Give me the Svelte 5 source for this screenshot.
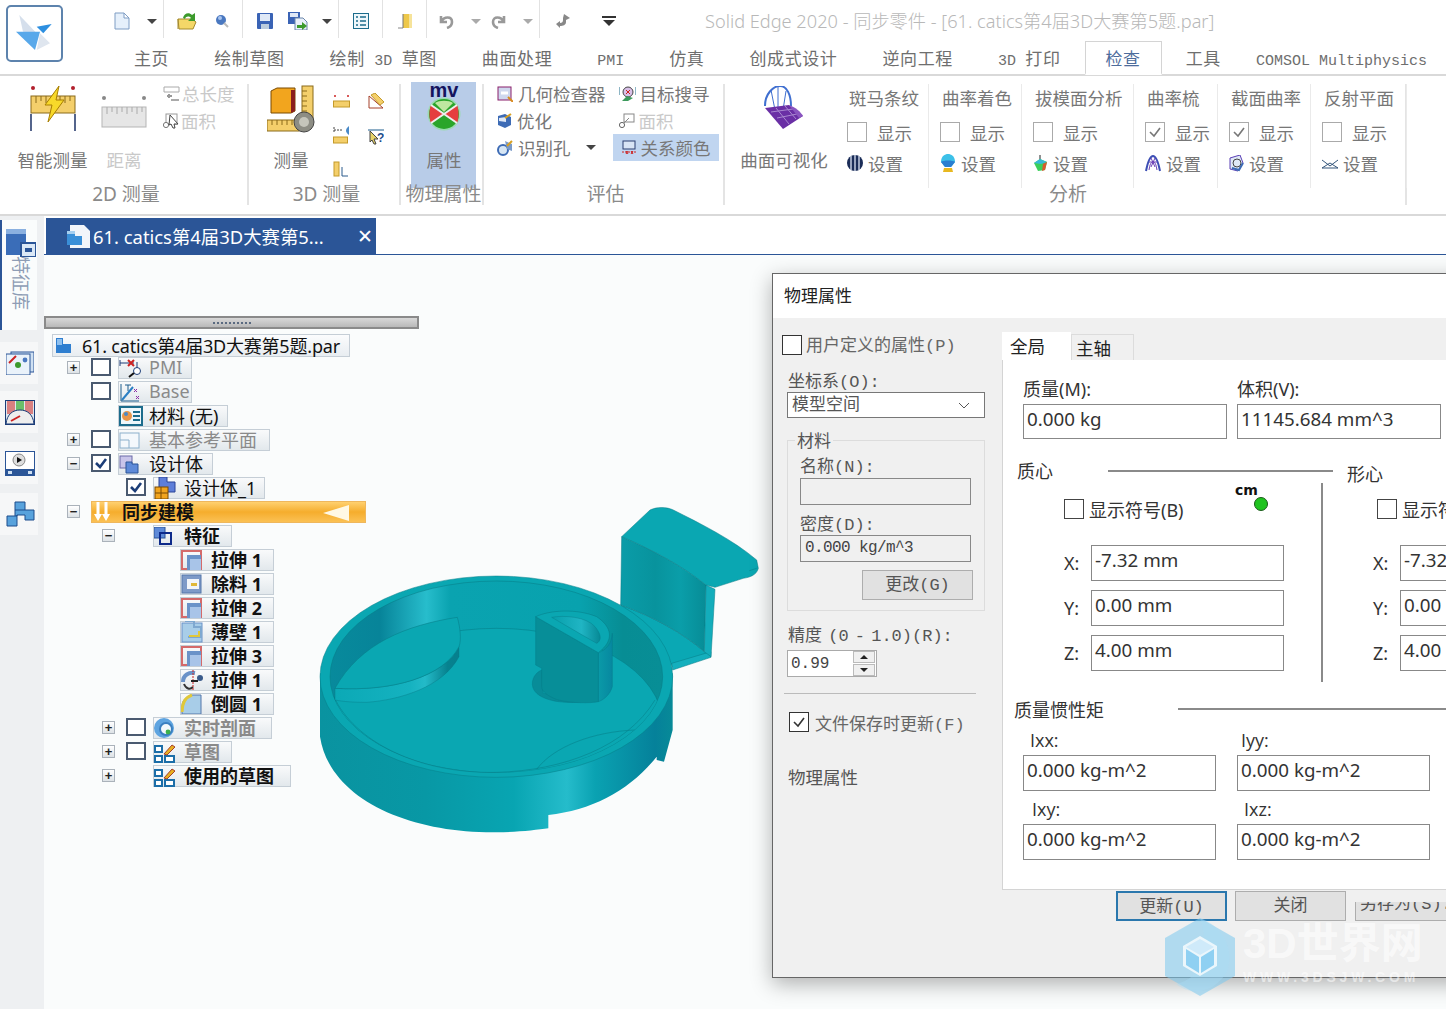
<script>
	// 图标都按原始像素尺寸画，viewBox 与宽高一致
	const icons = {
		newdoc: [16, 18, '<path d="M1 1H10L15 6V17H1Z" fill="#e6f0fb" stroke="#7f9dc4"/><path d="M10 1V6H15Z" fill="#fff" stroke="#7f9dc4"/>'],
		caret: [10, 5, '<path d="M0 0H10L5 5Z" fill="#444"/>'],
		caretgray: [10, 5, '<path d="M0 0H10L5 5Z" fill="#aaa"/>'],
		open: [20, 18, '<path d="M1 7H15L19 10L16 17H2Z" fill="#f4d768" stroke="#a58a2c"/><path d="M1 7V17" stroke="#a58a2c"/><path d="M6 6C7 1 12 0 15 3L18 1V9H11L14 6C12 4 9 4 8 7Z" fill="#3c9a2c"/>'],
		web: [14, 14, '<circle cx="6" cy="6" r="5" fill="#4a78c0"/><circle cx="5" cy="4" r="2" fill="#a8c4ee"/><path d="M9 9L13 13" stroke="#bbb" stroke-width="2"/>'],
		save: [16, 16, '<rect width="16" height="16" rx="1" fill="#3a63b5"/><rect x="3" y="1" width="10" height="7" fill="#dfe8f6"/><rect x="4" y="11" width="8" height="5" fill="#bcd"/>'],
		saveall: [22, 18, '<rect x="1" y="0" width="12" height="12" fill="#3a63b5"/><rect x="3" y="1" width="8" height="4" fill="#dfe8f6"/><path d="M8 6H16L20 10V18H8Z" fill="#e9f0fa" stroke="#6b86aa"/><path d="M10 13H15V10L20 14L15 18V16H10Z" fill="#3c9a2c"/>'],
		list: [16, 16, '<rect x=".5" y=".5" width="15" height="15" fill="#eef7fb" stroke="#1c6c8c"/><path d="M3 4H5M7 4H13M3 8H5M7 8H13M3 12H5M7 12H13" stroke="#1c6c8c" stroke-width="1.5"/>'],
		door: [16, 16, '<path d="M6 1H15V15H6Z" fill="#eec84a"/><path d="M12 1H15V15H12Z" fill="#f6e39a"/><path d="M1 15H6" stroke="#888"/><path d="M6 1V15" stroke="#777"/>'],
		undo: [16, 16, '<path d="M3 3V9H9M3 9C6 3 14 3 14 9C14 12 12 14 9 15" fill="none" stroke="#999" stroke-width="2.6"/>'],
		redo: [16, 16, '<path d="M13 3V9H7M13 9C10 3 2 3 2 9C2 12 4 14 7 15" fill="none" stroke="#999" stroke-width="2.6"/>'],
		swap: [16, 16, '<path d="M9 1L15 5L11 7V9C11 12 8 13 5 13V15L1 11L5 8V10C7 10 8 9 8 7L8 5Z" fill="#888"/>'],
		custom: [14, 10, '<rect width="14" height="2" fill="#333"/><path d="M1 4H13L7 10Z" fill="#333"/>'],
		logo: [40, 38, '<path d="M4.3 0L21.7 18.3L8 16.7Z" fill="#d5dfec"/><path d="M21.7 11.7L36.7 9L28.3 18.3Z" fill="#2d8fe0"/><path d="M1 16.7L25 16.7L20 35Z" fill="#58a8ea"/><path d="M25 18.3L35 28.3L21.7 35Z" fill="#dfe6ef"/>'],
		smart: [46, 47, '<circle cx="3" cy="3" r="2" fill="#b21f2d"/><circle cx="43" cy="3" r="2" fill="#b21f2d"/><rect x="1" y="11" width="44" height="17" fill="#f4cf6b" stroke="#8a6a1b"/><path d="M6 11V18M11 11V16M16 11V18M30 11V16M35 11V18M40 11V16" stroke="#8a6a1b"/><path d="M1 29V46M45 29V46" stroke="#2b3f70" stroke-width="1.6"/><path d="M29 1L15 20H22L18 37L34 15H26Z" fill="#f8d92a" stroke="#a87f00"/>'],
		dist: [46, 34, '<circle cx="3" cy="3" r="2" fill="#888"/><circle cx="43" cy="3" r="2" fill="#888"/><rect x="1" y="12" width="44" height="20" fill="#e6e6e6" stroke="#b5b5b5"/><path d="M6 12V19M11 12V17M16 12V19M21 12V17M26 12V19M31 12V17M36 12V19M41 12V17" stroke="#aaa"/>'],
		totlen: [17, 16, '<path d="M1 1H16V6H1Z" fill="none" stroke="#aaa"/><path d="M4 10H9M6 8V12" stroke="#999" stroke-width="2"/><path d="M8 14H16" stroke="#aaa" stroke-width="2"/>'],
		areasel: [16, 16, '<rect x="3" y="1" width="11" height="10" fill="#fff" stroke="#999"/><circle cx="3" cy="12" r="2.6" fill="#fff" stroke="#777"/><path d="M7 2L15 11H11L12 15L10 15L8 11L6 12Z" fill="#fff" stroke="#444"/>'],
		measure: [48, 48, '<path d="M4 6L10 3H28V26L24 28H4Z" fill="#f2a51e" stroke="#7a4a00"/><path d="M24 5H28V26L24 28Z" fill="#8a1f1f"/><rect x="35" y="1" width="11" height="33" fill="#f4cf6b" stroke="#8a6a1b"/><path d="M35 6H40M35 11H40M35 16H40M35 21H40M35 26H40" stroke="#8a6a1b"/><rect x="0" y="35" width="32" height="11" fill="#f4cf6b" stroke="#8a6a1b"/><path d="M5 35V40M10 35V40M15 35V40M20 35V40M25 35V40" stroke="#8a6a1b"/><circle cx="37" cy="37" r="10" fill="#8d8d84" stroke="#444"/><circle cx="37" cy="37" r="5" fill="#c5c5bb"/>'],
		m1: [17, 14, '<circle cx="2" cy="2" r="1" fill="#c22"/><circle cx="15" cy="2" r="1" fill="#c22"/><rect x=".5" y="7" width="16" height="6" fill="#f4cf6b" stroke="#c49a2b"/>'],
		m2: [16, 16, '<path d="M1 15V3L15 15Z" fill="none" stroke="#a5402a"/><path d="M3 2L7 0L16 9L12 12Z" fill="#f4cf6b" stroke="#c49a2b"/>'],
		m3: [17, 18, '<path d="M1 1V6M1 4H10" stroke="#444" stroke-dasharray="2 1"/><path d="M16 0C12 3 12 6 16 9Z" fill="#4a8ac8"/><rect x=".5" y="11" width="14" height="6" fill="#f4cf6b" stroke="#c49a2b"/>'],
		m4: [16, 20, '<g transform="translate(0 4)"><path d="M0 1H16" stroke="#1c5c8c"/><path d="M2 2L10 10H6L8 15L6 15L4 11L2 13Z" fill="#e8d368" stroke="#444"/><text x="9" y="13" font-size="12" font-weight="700" fill="#1c4c8c" font-family="Liberation Sans">?</text></g>'],
		m5: [16, 16, '<rect x="1" y="1" width="5" height="14" fill="#f4cf6b" stroke="#c49a2b"/><path d="M9 6V15H15" fill="none" stroke="#2b5b8c"/>'],
		mv: [38, 54, '<g transform="translate(0 8)"><circle cx="19" cy="29" r="16.5" fill="#8fe09a" opacity=".7"/><circle cx="19" cy="29" r="15" fill="#2aa52a"/><path d="M19 29L6 20C4 24 4 34 6 38Z" fill="#e53e3e"/><path d="M19 29L32 20C34 24 34 34 32 38Z" fill="#e53e3e"/><path d="M10 18C14 15 24 15 28 18L19 27Z" fill="#bfe7a0"/><path d="M6 20L32 38M32 20L6 38" stroke="#eee" stroke-width="2"/><text x="19" y="12" text-anchor="middle" font-size="20" font-weight="700" fill="#14145e" font-family="Liberation Sans">mv</text></g>'],
		geom: [16, 16, '<rect x="1" y="1" width="13" height="13" fill="#cfd8ee" stroke="#8a1f6a"/><path d="M4 7H11" stroke="#fff" stroke-width="3"/><path d="M11 11L16 16" stroke="#d88a20" stroke-width="2"/>'],
		target: [17, 16, '<circle cx="9" cy="6" r="5" fill="#d9c0e8" stroke="#444"/><path d="M7 4L11 8M11 4L7 8" stroke="#c22"/><path d="M0 1V9M17 1V9" stroke="#1c6c8c"/><path d="M3 15L8 10L14 12L9 15Z" fill="#3c9a5c"/>'],
		opt: [15, 16, '<path d="M1 3L8 1L14 4V12L8 15L1 12Z" fill="#3d6bb5"/><path d="M2 5L9 4V9L2 8Z" fill="#dfe8f6"/><path d="M8 5L14 1" stroke="#d8a020" stroke-width="2"/>'],
		hole: [16, 16, '<circle cx="6" cy="10" r="5" fill="#d7e6f4" stroke="#3d6bb5" stroke-width="2"/><path d="M8 1L15 4V11L10 9Z" fill="#7a9ac8"/><path d="M10 6L15 1" stroke="#d8a020" stroke-width="2"/>'],
		area2: [16, 15, '<rect x="5" y="1" width="10" height="8" fill="#fff" stroke="#888"/><circle cx="3" cy="12" r="2.6" fill="#fff" stroke="#666"/><path d="M5 10L10 5" stroke="#888"/>'],
		relc: [15, 15, '<rect x="1" y="1" width="12" height="8" fill="#d8e4f5" stroke="#2b3f70"/><path d="M4 11L6 14M6 11L4 14M9 11L11 14M11 11L9 14" stroke="#c22"/><path d="M0 12H15" stroke="#c22" stroke-dasharray="2 1"/>'],
		surfvis: [42, 44, '<path d="M2 20C2 8 10 0 17 0C24 0 28 9 28 20" fill="none" stroke="#3f6fd0" stroke-width="2"/><path d="M15 0V24M8 4L12 24M23 5L20 24" stroke="#3f6fd0"/><path d="M2 22L26 19L40 30L20 43Z" fill="#6a2fa5"/><path d="M8 26L30 23M14 32L34 28M13 22L26 38M22 20L33 33" stroke="#a887d0"/><path d="M26 19C32 21 38 26 40 30L36 32" fill="#8a55c0"/>'],
		zebra: [16, 16, '<circle cx="8" cy="8" r="8" fill="#1b2d58"/><path d="M4 1V15M8 0V16M12 1V15" stroke="#cfd8ea" stroke-width="1.4"/>'],
		curvc: [16, 18, '<path d="M1 8C1 2 5 0 8 0C11 0 15 2 15 8L11 13H5Z" fill="#3cc0e8"/><path d="M1 8C3 6 13 6 15 8L11 13H5Z" fill="#2a7ed0"/><path d="M4 14H12L13 18H3Z" fill="#e8b820"/>'],
		draft: [15, 16, '<path d="M7 0V5" stroke="#222"/><path d="M7 4L14 7L12 15L5 16L1 8Z" fill="#3ccf5a"/><path d="M1 8L7 4L14 7L8 9Z" fill="#36b8d8"/><path d="M10 9L14 7L12 15L9 16Z" fill="#d85a30"/>'],
		comb: [16, 17, '<path d="M1 16C3 6 5 1 8 1C11 1 13 6 15 16" fill="none" stroke="#3d4fb5" stroke-width="2"/><path d="M4 15C5 9 6 7 8 7C10 7 11 9 12 15M4 7L12 7M6 3L10 12M10 3L6 12" fill="none" stroke="#6a3fb5"/>'],
		section: [15, 17, '<path d="M1 3L11 0L14 8L9 16L1 14Z" fill="#dfe8f6" stroke="#5a3fb5"/><circle cx="8" cy="8" r="4" fill="none" stroke="#444"/><path d="M3 13L10 15L14 8" fill="none" stroke="#3d6bb5" stroke-width="2"/>'],
		reflect: [16, 11, '<path d="M0 2L8 8L16 2M0 10L8 5L16 10M0 10H16" fill="none" stroke="#33557a"/>'],
		feat: [30, 28, '<rect x="0" y="0" width="20" height="26" fill="#3a6db8"/><rect x="0" y="0" width="20" height="5" fill="#8ab0e0"/><rect x="15" y="14" width="15" height="14" fill="#dbe8f6" stroke="#2b5597" stroke-width="2"/><rect x="19" y="19" width="7" height="4" fill="#2b5597"/>'],
		rail2: [28, 24, '<rect x="5" y="1" width="23" height="20" fill="#cfe0f2" stroke="#2b5597"/><rect x="0" y="3" width="24" height="21" fill="#eaf2fa" stroke="#2b5597"/><path d="M3 12L10 5" stroke="#c22" stroke-width="2"/><circle cx="12" cy="14" r="3" fill="#3c9a2c"/><circle cx="19" cy="9" r="2.4" fill="#4a78c0"/>'],
		gauge: [30, 25, '<rect x=".5" y=".5" width="29" height="24" fill="#dfe7ef" stroke="#1c3d78"/><path d="M2 1H10V14H2ZM20 1H28V14H20Z" fill="#d98080"/><path d="M11 1H19V14H11Z" fill="#6abf6a"/><path d="M1 24C2 14 8 10 15 10C22 10 28 14 29 24Z" fill="#eee" stroke="#1c3d78"/><path d="M6 21L15 16" stroke="#c22" stroke-width="2"/>'],
		play: [30, 25, '<rect x=".5" y=".5" width="29" height="24" fill="#fff" stroke="#2b5597"/><rect x="0" y="18" width="30" height="7" fill="#2b5597"/><path d="M3 20H7V23H3ZM23 20H27V23H23Z" fill="#cfe0f2"/><circle cx="14" cy="9" r="6" fill="#dedede" stroke="#888"/><path d="M12 6L17 9L12 12Z" fill="#111"/>'],
		blocks: [29, 26, '<path d="M9 1H19V9H28V19H19V14H11V25H1V15H9Z" fill="#58a2dc" stroke="#1c4c8c"/><path d="M9 9H19M11 15V14M9 15H11" stroke="#1c4c8c"/>'],
		docpar: [23, 23, '<path d="M3 0H17L23 6V23H3Z" fill="#f2f5fa"/><path d="M0 6H8V11H15V20H0Z" fill="#3a8fd8"/><path d="M0 6H8V9H0Z" fill="#a5cff0"/>'],
		root: [15, 15, '<path d="M0 0H7V6H15V15H0Z" fill="#2f7fd0"/><path d="M1 1H6V7H1Z" fill="#8fc0ee"/>'],
		pmi: [24, 20, '<path d="M1 2V8M1 5H15" stroke="#1c3d78"/><path d="M9 2L15 8M15 2L9 8" stroke="#c22" stroke-width="2"/><path d="M18 4V14" stroke="#1c3d78"/><circle cx="18" cy="13" r="3.5" fill="#fff" stroke="#1c3d78"/><path d="M15 15L10 19" stroke="#111" stroke-width="2"/>'],
		base: [22, 20, '<path d="M3 18L14 5" stroke="#2b7fc4" stroke-width="2"/><path d="M2 2V19H20" fill="none" stroke="#1c5c8c"/><path d="M6 3H12M9 3V9" stroke="#1c5c8c"/><path d="M15 7L18 10M18 7L15 10M17 14L20 17M20 14L17 17" stroke="#8a2fa5"/>'],
		mat: [24, 20, '<rect x="1" y="1" width="22" height="18" fill="#eef7fb" stroke="#1c6c8c" stroke-width="2"/><circle cx="8" cy="10" r="5" fill="#e8964a"/><circle cx="7" cy="8" r="2" fill="#4a8ac8"/><path d="M14 6H21M14 10H21M14 14H21" stroke="#1c6c8c" stroke-width="2"/>'],
		plane: [21, 17, '<rect x="1" y="1" width="19" height="15" fill="#f4f8fc" stroke="#8cb0cc"/><path d="M1 8H10V16" fill="none" stroke="#8cb0cc"/>'],
		body: [20, 19, '<rect x="1" y="1" width="12" height="12" fill="#c9c5ea" stroke="#6a6aa8"/><path d="M7 7H13V9H19V18H7Z" fill="#5e8ad8" stroke="#2b5597"/>'],
		body1: [22, 22, '<path d="M5 0H13V5H21V15H5Z" fill="#5e7ed8" stroke="#2b4597"/><rect x="1" y="10" width="13" height="12" fill="#f2a51e" stroke="#7a4a00"/><path d="M7 10V22M1 16H14" stroke="#7a4a00"/>'],
		sync: [20, 20, '<path d="M6 0V14M14 0V14" stroke="#fff" stroke-width="3"/><path d="M2 12H10L6 19ZM10 12H18L14 19Z" fill="#fff"/>'],
		featn: [18, 18, '<rect x="0" y="0" width="11" height="11" fill="#5e8ad8" stroke="#2b5597"/><path d="M6 6H17V17H6Z" fill="none" stroke="#0d2a8a" stroke-width="2"/>'],
		ext: [21, 20, '<rect x="1" y="1" width="19" height="18" fill="none" stroke="#d46a6a" stroke-width="2"/><rect x="6" y="5" width="14" height="15" fill="#6a92c8"/><rect x="9" y="9" width="11" height="11" fill="#a8c4e8"/>'],
		cut: [21, 20, '<rect x="1" y="1" width="19" height="18" fill="#7e9ac8" stroke="#5577aa"/><rect x="6" y="5" width="12" height="10" fill="#f2f5fa"/><rect x="10" y="9" width="6" height="3" fill="#e0b83a"/>'],
		shell: [22, 22, '<rect x="1" y="2" width="20" height="19" fill="#a8cde8" stroke="#6a92c8"/><path d="M4 0H13V6H20V16H7" fill="none" stroke="#7ea8d0" stroke-width="2"/><path d="M8 15H18V10" fill="none" stroke="#e0c83a" stroke-width="2"/>'],
		rev: [23, 21, '<path d="M2 12C2 5 8 2 14 3" fill="none" stroke="#6a92c8" stroke-width="4"/><path d="M3 14C5 19 9 20 12 17" fill="none" stroke="#333" stroke-width="2"/><path d="M12 0V21" stroke="#c22" stroke-dasharray="2 1"/><path d="M10 11H17" stroke="#222" stroke-width="2"/><circle cx="19" cy="8" r="3" fill="#3a5a8a"/>'],
		round: [21, 20, '<path d="M1 20V12C1 6 6 2 11 1H20V20Z" fill="#a8cde8" stroke="#5577aa"/><path d="M1 18C1 9 5 3 11 1" fill="none" stroke="#e0c83a" stroke-width="3"/>'],
		live: [22, 22, '<circle cx="10" cy="11" r="10" fill="#5ea4e0"/><circle cx="12" cy="12" r="6" fill="#f2f8fc" stroke="#3a7fc0" stroke-width="2"/><circle cx="14" cy="15" r="2.4" fill="#3cb04a"/>'],
		sketch: [22, 21, '<path d="M1 4H8V10H1ZM1 14H8V20H1ZM11 14H20V20H11Z" fill="#fff" stroke="#1c6ea8" stroke-width="2"/><path d="M10 12L18 3L21 5L13 13Z" fill="#e8b020" stroke="#a5402a"/>']
	};

	// l / r 是槽内左右留白，用来把图标对到原来的位置
	const toolbar = [
		{ w: 30, i: 'newdoc' }, { w: 27, l: 3, i: 'caret', sep: true }, { w: 46, i: 'open' }, { w: 33, r: 8, i: 'web', sep: true },
		{ w: 44, i: 'save' }, { w: 20, i: 'saveall' }, { w: 32, l: 8, i: 'caret', sep: true }, { w: 44, i: 'list', sep: true },
		{ w: 44, i: 'door', sep: true }, { w: 38, i: 'undo' }, { w: 22, i: 'caretgray' }, { w: 24, i: 'redo' },
		{ w: 29, l: 5, i: 'caretgray', sep: true }, { w: 46, i: 'swap' }, { w: 46, i: 'custom' }
	];

	const checks = [
		{ title: '斑马条纹', w: 93, on: false, i: 'zebra' },
		{ title: '曲率着色', w: 93, on: false, i: 'curvc' },
		{ title: '拔模面分析', w: 112, on: false, i: 'draft' },
		{ title: '曲率梳', w: 84, on: true, i: 'comb' },
		{ title: '截面曲率', w: 93, on: true, i: 'section' },
		{ title: '反射平面', w: 96, on: false, i: 'reflect' }
	];

	const tree = [
		{ exp: 67, open: false, chk: 91, x: 118, w: 74, i: 'pmi', t: 'PMI', dim: true },
		{ chk: 91, x: 118, w: 74, i: 'base', t: 'Base', dim: true },
		{ x: 118, w: 110, i: 'mat', t: '材料 (无)' },
		{ exp: 67, open: false, chk: 91, x: 118, w: 152, i: 'plane', t: '基本参考平面', dim: true },
		{ exp: 67, open: true, chk: 91, on: true, x: 118, w: 95, i: 'body', t: '设计体' },
		{ chk: 126, on: true, x: 153, w: 112, i: 'body1', t: '设计体_1' },
		{ exp: 67, open: true, x: 91, w: 275, i: 'sync', t: '同步建模', sync: true },
		{ exp: 102, open: true, x: 153, w: 79, i: 'featn', t: '特征', bold: true },
		{ x: 180, w: 94, i: 'ext', t: '拉伸 1', bold: true },
		{ x: 180, w: 94, i: 'cut', t: '除料 1', bold: true },
		{ x: 180, w: 94, i: 'ext', t: '拉伸 2', bold: true },
		{ x: 180, w: 94, i: 'shell', t: '薄壁 1', bold: true },
		{ x: 180, w: 94, i: 'ext', t: '拉伸 3', bold: true },
		{ x: 180, w: 94, i: 'rev', t: '拉伸 1', bold: true },
		{ x: 180, w: 94, i: 'round', t: '倒圆 1', bold: true },
		{ exp: 102, open: false, chk: 126, x: 153, w: 119, i: 'live', t: '实时剖面', dim: true, bold: true },
		{ exp: 102, open: false, chk: 126, x: 153, w: 79, i: 'sketch', t: '草图', dim: true, bold: true },
		{ exp: 102, open: false, x: 153, w: 138, i: 'sketch', t: '使用的草图', bold: true }
	];

	// 树的各列按页面 x 写在数据里，这里换算成相邻元素的间距
	function gaps(r) {
		let p = 44;
		const out = {};
		if (r.exp) { out.exp = r.exp - p; p = r.exp + 13; }
		if (r.chk) { out.chk = r.chk - p; p = r.chk + 20; }
		out.x = r.x - p;
		return out;
	}

	const xyz = [['X:', '-7.32 mm'], ['Y:', '0.00 mm'], ['Z:', '4.00 mm']];
	const inertia = [['Ixx:', 7], ['Iyy:', 4], ['Ixy:', 9], ['Ixz:', 7]];
</script>

{#snippet ic(name)}
	<svg class="ic" width={icons[name][0]} height={icons[name][1]} viewBox="0 0 {icons[name][0]} {icons[name][1]}">{@html icons[name][2]}</svg>
{/snippet}

{#snippet small(name, text, cls = '')}
	<div class="small {cls}">{@render ic(name)}<span>{text}</span></div>
{/snippet}

<div class="app">
	<header class="head">
		<div class="logo">{@render ic('logo')}</div>
		<div class="head-top">
			<div class="toolbar">
				{#each toolbar as b}
					<div class="tool" class:sep={b.sep} style="width:{b.w}px;padding-left:{b.l ?? 0}px;padding-right:{b.r ?? 0}px">{@render ic(b.i)}</div>
				{/each}
			</div>
			<div class="wintitle">Solid Edge 2020 - 同步零件 - [61. catics第4届3D大赛第5题.par]</div>
		</div>
		<nav class="tabs">
			<span>主页</span>
			<span>绘制草图</span>
			<span>绘制 <i class="wide">3D</i> 草图</span>
			<span>曲面处理</span>
			<span><i>PMI</i></span>
			<span>仿真</span>
			<span>创成式设计</span>
			<span>逆向工程</span>
			<span><i class="after">3D</i> 打印</span>
			<span class="active">检查</span>
			<span>工具</span>
			<span class="comsol"><i>COMSOL Multiphysics</i></span>
		</nav>
	</header>

	<section class="ribbon">
		<div class="group g-2d">
			<div class="g-main">
				<div class="big b-smart"><div class="big-ic">{@render ic('smart')}</div><span>智能测量</span></div>
				<div class="big b-dist off"><div class="big-ic">{@render ic('dist')}</div><span>距离</span></div>
				<div class="smalls off">
					{@render small('totlen', '总长度')}
					{@render small('areasel', '面积')}
				</div>
			</div>
			<div class="cap shift">2D 测量</div>
		</div>
		<div class="group g-3d">
			<div class="g-main">
				<div class="big b-meas"><div class="big-ic">{@render ic('measure')}</div><span>测量</span></div>
				<div class="mini-grid">
					{@render ic('m1')}{@render ic('m2')}{@render ic('m3')}{@render ic('m4')}{@render ic('m5')}
				</div>
			</div>
			<div class="cap shift">3D 测量</div>
		</div>
		<div class="group g-prop">
			<div class="prop-hi"></div>
			<div class="g-main">
				<div class="big b-prop"><div class="big-ic">{@render ic('mv')}</div><span>属性</span></div>
			</div>
			<div class="cap">物理属性</div>
		</div>
		<div class="group g-eval">
			<div class="g-main">
				<div class="smalls">
					{@render small('geom', '几何检查器')}
					{@render small('opt', '优化')}
					<div class="small">{@render ic('hole')}<span>识别孔</span><span class="mini-caret">{@render ic('caret')}</span></div>
				</div>
				<div class="smalls second">
					{@render small('target', '目标搜寻')}
					{@render small('area2', '面积', 'off')}
					{@render small('relc', '关系颜色', 'hi')}
				</div>
			</div>
			<div class="cap shift-s">评估</div>
		</div>
		<div class="group g-vis">
			<div class="g-main">
				<div class="big b-vis"><div class="big-ic">{@render ic('surfvis')}</div><span>曲面可视化</span></div>
			</div>
		</div>
		<div class="group g-ana">
			<div class="g-main checks">
				{#each checks as c}
					<div class="chk-group" style="width:{c.w}px">
						<div class="chk-title">{c.title}</div>
						<div class="chk-line">
							<span class="rbox">{#if c.on}<svg width="14" height="12" viewBox="0 0 14 12"><path d="M2 6L6 10L12 2" fill="none" stroke="#777" stroke-width="1.6"/></svg>{/if}</span>
							<span>显示</span>
						</div>
						<div class="set-line">{@render ic(c.i)}<span>设置</span></div>
					</div>
				{/each}
			</div>
			<div class="cap ana-cap">分析</div>
		</div>
	</section>

	<div class="work">
		<aside class="rail">
			<div class="rail-tab">
				{@render ic('feat')}
				<span class="vtext">特征库</span>
			</div>
			<div class="rail-item">{@render ic('rail2')}</div>
			<div class="rail-item">{@render ic('gauge')}</div>
			<div class="rail-item">{@render ic('play')}</div>
			<div class="rail-item">{@render ic('blocks')}</div>
		</aside>

		<main class="main">
			<div class="docbar">
				<div class="doctab">
					{@render ic('docpar')}
					<span class="docname">61. catics第4届3D大赛第5...</span>
					<span class="docx">✕</span>
				</div>
			</div>
			<div class="canvas">
				<svg class="part" width="460" height="340" viewBox="0 0 1380 1020">
					<defs>
						<linearGradient id="side" x1="30" x2="1088" y1="0" y2="0" gradientUnits="userSpaceOnUse">
							<stop offset="0" stop-color="#0a93a0" />
							<stop offset=".3" stop-color="#0898a5" />
							<stop offset=".55" stop-color="#08a5b2" />
							<stop offset=".7" stop-color="#25bccb" />
							<stop offset=".78" stop-color="#0aa2b2" />
							<stop offset=".95" stop-color="#05819a" />
							<stop offset="1" stop-color="#078a98" />
						</linearGradient>
						<linearGradient id="wall" x1="60" x2="1058" y1="0" y2="0" gradientUnits="userSpaceOnUse">
							<stop offset="0" stop-color="#088a9c" />
							<stop offset=".15" stop-color="#078499" />
							<stop offset=".29" stop-color="#27bdcc" />
							<stop offset=".36" stop-color="#0aa3b0" />
							<stop offset=".75" stop-color="#08a2ae" />
							<stop offset=".88" stop-color="#078d94" />
							<stop offset="1" stop-color="#088e96" />
						</linearGradient>
						<linearGradient id="seg" x1="75" x2="450" y1="0" y2="0" gradientUnits="userSpaceOnUse">
							<stop offset="0" stop-color="#0ba9b6" />
							<stop offset=".6" stop-color="#15b2c0" />
							<stop offset=".72" stop-color="#23bac8" />
							<stop offset=".9" stop-color="#07828f" />
							<stop offset="1" stop-color="#067f8d" />
						</linearGradient>
						<linearGradient id="tabwall" x1="935" x2="1188" y1="0" y2="0" gradientUnits="userSpaceOnUse">
							<stop offset="0" stop-color="#0a9ca8" />
							<stop offset=".4" stop-color="#08939d" />
							<stop offset=".7" stop-color="#0a9ea9" />
							<stop offset="1" stop-color="#078c96" />
						</linearGradient>
						<linearGradient id="pin" x1="865" x2="907" y1="0" y2="0" gradientUnits="userSpaceOnUse">
							<stop offset="0" stop-color="#0a9aa8" />
							<stop offset="1" stop-color="#0788a0" />
						</linearGradient>
						<linearGradient id="pinin" x1="730" x2="870" y1="0" y2="0" gradientUnits="userSpaceOnUse">
							<stop offset="0" stop-color="#08a0ac" />
							<stop offset=".6" stop-color="#20b5c4" />
							<stop offset="1" stop-color="#078a96" />
						</linearGradient>
						<clipPath id="innerclip"><ellipse cx="559" cy="530" rx="499" ry="287" /></clipPath>
					</defs>
					<g stroke="#067a85" stroke-width="1.5" stroke-linejoin="round">
						<path d="M932 315C1030 350 1120 400 1183 455L1203 462L1088 500L1040 410Z" fill="#0aa8b4" />
						<path d="M1085 490L1203 455V472L1088 510Z" fill="#14afbd" />
						<path d="M935 110C1030 150 1120 200 1188 255L1183 455C1120 400 1030 350 932 315Z" fill="url(#tabwall)" />
						<path d="M1188 255L1215 268L1203 470L1183 455Z" fill="#13adbb" />
						<path d="M935 110L1020 30C1040 20 1070 20 1090 30C1170 70 1270 120 1340 180L1345 205C1340 225 1320 232 1300 235L1215 262L1188 255C1120 200 1030 150 935 110Z" fill="#0aa7b2" />
						<path d="M1318 212L1340 205" fill="none" />
					</g>
					<!-- 外壁 -->
					<path d="M30 520V710C60 900 300 1000 560 997C620 997 680 990 715 985V945C850 930 960 870 1040 770V780L1062 785L1088 690V520Z" fill="url(#side)" />
					<!-- 上沿 -->
					<ellipse cx="559" cy="530" rx="529" ry="302" fill="#0aa7b2" stroke="#077e88" stroke-width="1.5" />
					<ellipse cx="559" cy="530" rx="499" ry="287" fill="url(#wall)" stroke="#067a85" stroke-width="1.5" />
					<g clip-path="url(#innerclip)">
						<ellipse cx="559" cy="672" rx="499" ry="287" fill="#0aa7b2" stroke="#067a85" stroke-width="1.5" />
						<path d="M680 808C730 740 850 695 975 690" fill="none" stroke="#067a85" stroke-width="1.5" />
					</g>
					<!-- 底面边缘内圈 -->
					<path d="M72 590C130 720 320 822 559 817C760 812 950 740 1035 600" fill="none" stroke="#067a85" stroke-width="1.5" />
					<!-- 左侧凸台 -->
					<path d="M75 565C250 575 400 530 447 440V470C400 560 270 600 170 607C130 607 100 605 75 600Z" fill="url(#seg)" stroke="#067a85" stroke-width="1.2" />
					<path d="M75 565C150 430 290 375 442 352C450 380 455 420 447 440C400 530 250 575 75 565Z" fill="#0aa7b2" stroke="#067a85" stroke-width="1.5" />
					<!-- 中间 D 形柱 -->
					<path d="M695 510C670 520 660 550 672 570C690 600 750 610 800 607L865 602L700 580Z" fill="#088c98" stroke="#067a85" stroke-width="1.2" />
					<path d="M865 458C890 450 905 430 907 400V560C900 585 880 600 865 605Z" fill="url(#pin)" stroke="#067a85" stroke-width="1.2" />
					<path d="M677 350L865 458V605C840 610 790 610 745 600C715 590 695 575 695 560V505L677 495Z" fill="#078e98" stroke="#067a85" stroke-width="1.2" />
					<path d="M677 350C720 330 800 325 860 350C905 380 915 420 865 458Z" fill="#0aa7b2" stroke="#067a85" stroke-width="1.5" />
					<path d="M725 352C760 345 830 350 855 380C880 410 870 425 860 430Z" fill="url(#pinin)" stroke="#067a85" stroke-width="1.2" />
				</svg>

				<div class="splitter"><span class="grip"></span></div>

				<div class="tree">
					<div class="rootrow"><div class="rootlabel">{@render ic('root')}<span>61. catics第4届3D大赛第5题.par</span></div></div>
					{#each tree as r}
						{@const g = gaps(r)}
						<div class="row">
							{#if r.exp}
								<span class="exp" style="margin-left:{g.exp}px">{r.open ? '−' : '+'}</span>
							{/if}
							{#if r.chk}
								<span class="tchk" style="margin-left:{g.chk}px">
									{#if r.on}<svg width="14" height="12" viewBox="0 0 14 12"><path d="M2 6L6 10L12 2" fill="none" stroke="#1c3d78" stroke-width="2.6"/></svg>{/if}
								</span>
							{/if}
							<div class="lab" class:dim={r.dim} class:bold={r.bold} class:sync={r.sync} style="margin-left:{g.x}px;width:{r.w}px">
								<span class="lab-ic">{@render ic(r.i)}</span>
								<span class="lab-t">{r.t}</span>
								{#if r.sync}<svg class="sync-arrow" width="26" height="16" viewBox="0 0 26 16"><path d="M26 0V16L0 8Z" fill="#fff8e4"/></svg>{/if}
							</div>
						</div>
					{/each}
				</div>
			</div>
		</main>
	</div>

	<div class="dialog">
		<div class="dlg-title">物理属性</div>
		<div class="dlg-body">
			<div class="dlg-left">
				<label class="l-check first"><span class="dbox"></span><span class="gray">用户定义的属性(P)</span></label>
				<div class="l-lab coord">坐标系(O):</div>
				<div class="select"><span>模型空间</span><svg width="12" height="7" viewBox="0 0 12 7"><path d="M1 1L6 6L11 1" fill="none" stroke="#555"/></svg></div>
				<fieldset>
					<legend>材料</legend>
					<div class="l-lab name">名称(N):</div>
					<div class="finput"></div>
					<div class="l-lab dens">密度(D):</div>
					<div class="finput">0.000 kg/m^3</div>
					<div class="change">更改(G)</div>
				</fieldset>
				<div class="l-lab prec">精度 (0 - 1.0)(R):</div>
				<div class="spin">
					<span>0.99</span>
					<div class="spin-btns">
						<b><svg width="8" height="4" viewBox="0 0 8 4"><path d="M0 4H8L4 0Z" fill="#222"/></svg></b>
						<b><svg width="8" height="4" viewBox="0 0 8 4"><path d="M0 0H8L4 4Z" fill="#222"/></svg></b>
					</div>
				</div>
				<div class="hr"></div>
				<label class="l-check upd">
					<span class="dbox"><svg width="14" height="12" viewBox="0 0 14 12"><path d="M2 6L6 10L12 2" fill="none" stroke="#333" stroke-width="1.6"/></svg></span>
					<span class="gray">文件保存时更新(F)</span>
				</label>
				<div class="l-lab prop">物理属性</div>
			</div>

			<div class="dlg-right">
				<div class="dtabs">
					<span class="dtab on">全局</span>
					<span class="dtab">主轴</span>
				</div>
				<div class="panel">
					<div class="two">
						<div class="field"><div class="f-lab">质量(M):</div><div class="val tall">0.000 kg</div></div>
						<div class="field"><div class="f-lab">体积(V):</div><div class="val tall">11145.684 mm^3</div></div>
					</div>

					<div class="sec-head">
						<span class="s-t1">质心</span>
						<span class="s-line"></span>
						<span class="s-t2">形心</span>
					</div>

					<div class="centers">
						<div class="center-l">
							<div class="ck-row">
								<span class="dbox"></span><span>显示符号(B)</span>
								<div class="symbol"><b>cm</b><i></i></div>
							</div>
							{#each xyz as [a, v]}
								<div class="xyz"><span>{a}</span><div class="val">{v}</div></div>
							{/each}
						</div>
						<div class="vline"></div>
						<div class="center-r">
							<div class="ck-row"><span class="dbox"></span><span>显示符号(B)</span></div>
							{#each xyz as [a, v]}
								<div class="xyz"><span>{a}</span><div class="val">{v}</div></div>
							{/each}
						</div>
					</div>

					<div class="sec-head second">
						<span class="s-t3">质量惯性矩</span>
						<span class="s-line"></span>
					</div>
					<div class="inertia">
						{#each inertia as [a, pad]}
							<div class="in-cell">
								<div class="in-lab" style="padding-left:{pad}px">{a}</div>
								<div class="val">0.000 kg-m^2</div>
							</div>
						{/each}
					</div>
				</div>
				<div class="btns">
					<span class="btn main-btn">更新(U)</span>
					<span class="btn">关闭</span>
					<span class="btn cut-btn"><span>另存为(S)...</span></span>
				</div>
			</div>
		</div>
	</div>

	<div class="mark">
		<svg width="72" height="78" viewBox="0 0 72 78">
			<path d="M36 0L71 20V58L36 78L1 58V20Z" fill="#7cc8ef" opacity=".55" />
			<path d="M36 0C60 8 72 35 62 55C52 72 30 80 12 66C30 62 50 45 36 0Z" fill="#a8dcf6" opacity=".35" />
			<path d="M36 18L53 28V48L36 58L19 48V28Z" fill="#fff" opacity=".75" />
			<path d="M36 21L50 29L36 37L22 29Z" fill="#cfeafa" />
			<path d="M22 31L35 39V55L22 47ZM37 39L50 31V47L37 55Z" fill="#8fd0f2" />
		</svg>
		<div class="mark-t">
			<div class="mark-a">3D世界网</div>
			<div class="mark-b">WWW.3DSJW.COM</div>
		</div>
	</div>
</div>

<style>
	:global(body) {
		margin: 0;
		background: #fff;
	}

	.app {
		--cjk: 'Noto Sans CJK SC', sans-serif;
		--ui: 'Noto Sans', 'Noto Sans CJK SC', sans-serif;
		--mono: 'Liberation Mono', 'Noto Sans CJK SC', monospace;
		position: relative;
		width: 1446px;
		height: 1009px;
		overflow: hidden;
		background: #fff;
		font-family: var(--cjk);
		color: #666;
	}

	.ic {
		display: block;
		flex: none;
	}

	/* 顶部 */
	.head {
		display: grid;
		grid-template-columns: 72px 1fr;
		grid-template-rows: 41px 33px;
		height: 74px;
	}

	.logo {
		grid-row: 1 / 3;
		width: 53px;
		height: 53px;
		margin: 5px 0 0 6px;
		border: 2px solid #5d83ad;
		border-radius: 5px;
		display: grid;
		place-items: center;
	}

	.head-top {
		display: flex;
		align-items: flex-start;
		min-width: 0;
	}

	.toolbar {
		display: flex;
		height: 38px;
		margin-left: 35px;
		width: 598px;
		flex: none;
	}

	.tool {
		display: grid;
		place-items: center;
		height: 38px;
		padding-top: 4px;
		box-sizing: border-box;
		flex: none;
	}

	.tool.sep {
		border-right: 1px solid #e2e2e2;
	}

	.wintitle {
		font-family: var(--ui);
		font-size: 18.2px;
		line-height: 42px;
		color: #b8b8b8;
		white-space: nowrap;
		font-weight: 300;
	}

	.tabs {
		grid-column: 2;
		display: flex;
		gap: 45px;
		padding-left: 62px;
		font-size: 17px;
		letter-spacing: 0.6px;
		line-height: 33px;
		color: #6e6e6e;
		white-space: nowrap;
	}

	.tabs i {
		font-family: 'Liberation Mono', monospace;
		font-style: normal;
		font-size: 15px;
		letter-spacing: 0;
	}

	.tabs i.wide {
		margin: 0 5px;
	}

	.tabs i.after {
		margin-right: 5px;
	}

	.tabs .active {
		color: #4d6c9c;
		position: relative;
		z-index: 1;
	}

	.tabs .active::before {
		content: '';
		position: absolute;
		inset: 0 -21px -1px;
		border: 1px solid #d4d4d4;
		border-bottom: 2px solid #fff;
		z-index: -1;
	}

	.tabs .comsol {
		margin-left: -10px;
	}

	/* 功能区 */
	.ribbon {
		display: flex;
		height: 142px;
		box-sizing: border-box;
		border-top: 2px solid #d9d9d9;
		border-bottom: 2px solid #d9d9d9;
		font-size: 17.5px;
		color: #777;
	}

	.group {
		position: relative;
		box-sizing: border-box;
		height: 121px;
		margin-top: 8px;
		border-right: 2px solid #e4e4e4;
		display: grid;
		grid-template-rows: 97px 24px;
		flex: none;
	}

	.g-main {
		display: flex;
		align-items: flex-start;
	}

	.cap {
		text-align: center;
		font-size: 19px;
		line-height: 26px;
		color: #8a8a8a;
		font-family: var(--ui);
		white-space: nowrap;
	}

	.cap.shift {
		padding-left: 5px;
	}

	.cap.shift-s {
		padding-left: 4px;
	}

	.g-2d { width: 249px; }
	.g-3d { width: 152px; }
	.g-prop { width: 83px; }
	.g-eval { width: 241px; }
	.g-vis { width: 111px; border-right: 0; }
	.g-ana { width: 571px; }

	.big {
		display: flex;
		flex-direction: column;
		align-items: center;
		flex: none;
	}

	.big-ic {
		height: 66px;
		padding-top: 1px;
		box-sizing: border-box;
	}

	.big span {
		line-height: 20px;
		white-space: nowrap;
	}

	.b-smart { margin-left: 17px; width: 71px; }
	.b-dist { margin-left: 12px; width: 48px; }
	.b-meas { margin-left: 18px; width: 48px; }
	.b-prop { margin-left: 24px; width: 38px; }
	.b-prop .big-ic { height: 74px; margin-top: -8px; }
	.b-vis { margin-left: 15px; width: 88px; }
	.b-vis .big-ic { padding-top: 2px; }
	.b-dist .big-ic { padding-top: 11px; }

	.off,
	.off span {
		color: #c9c9c9;
	}

	.smalls {
		display: flex;
		flex-direction: column;
		margin: -4px 0 0 15px;
	}

	.small {
		display: flex;
		align-items: center;
		gap: 2px;
		height: 27px;
		white-space: nowrap;
	}

	.g-eval .smalls {
		margin-left: 13px;
	}

	.g-eval .small {
		gap: 5px;
	}

	.g-eval .smalls.second {
		margin-left: 10px;
		width: 103px;
	}

	.g-eval .second .small {
		padding-left: 3px;
		gap: 4px;
	}

	.g-eval .second .small.hi {
		background: #c0d5f0;
		margin-left: -3px;
		padding-left: 9px;
	}

	.mini-caret {
		margin-left: 10px;
	}

	.mini-grid {
		display: grid;
		grid-template-columns: 35px 20px;
		grid-auto-rows: 34px;
		align-items: center;
		margin: 0 0 0 18px;
	}

	.prop-hi {
		position: absolute;
		left: 10px;
		top: -2px;
		width: 65px;
		height: 106px;
		background: #b8cce8;
	}

	.g-prop .g-main,
	.g-prop .cap {
		position: relative;
	}

	.g-prop .cap {
		margin: 0 -6px 0 -2px;
	}

	.checks {
		height: 105px;
	}

	.ana-cap {
		width: 464px;
	}

	.chk-group {
		box-sizing: border-box;
		height: 104px;
		padding-left: 11px;
		border-right: 1px solid #eaeaea;
		flex: none;
	}

	.chk-title {
		margin: 3px 0 0 2px;
		line-height: 22px;
		white-space: nowrap;
	}

	.chk-line {
		display: flex;
		align-items: center;
		gap: 10px;
		margin-top: 13px;
		height: 20px;
	}

	.rbox {
		box-sizing: border-box;
		width: 20px;
		height: 20px;
		border: 1px solid #aaa;
		display: grid;
		place-items: center;
		flex: none;
	}

	.set-line {
		display: flex;
		align-items: center;
		gap: 5px;
		margin-top: 10px;
		height: 22px;
	}

	/* 工作区 */
	.work {
		display: flex;
		height: 793px;
	}

	.rail {
		width: 44px;
		flex: none;
		background: #eef0f2;
		padding-top: 4px;
		box-sizing: border-box;
	}

	.rail-tab {
		box-sizing: border-box;
		width: 37px;
		height: 110px;
		border-left: 2px solid #2b5597;
		background: #fafcfc;
		padding: 9px 0 0 4px;
	}

	.vtext {
		display: block;
		writing-mode: vertical-rl;
		text-orientation: sideways;
		font-size: 18px;
		line-height: 22px;
		color: #8e9db5;
		margin: -1px 0 0 5px;
	}

	.rail-item {
		width: 38px;
		height: 42px;
		margin-top: 9px;
		background: #f6f7f8;
		display: grid;
		place-items: center;
		box-sizing: border-box;
		padding-left: 2px;
	}

	.rail-item:nth-child(2) { margin-top: 12px; }
	.rail-item:nth-child(3) { margin-top: 7px; }

	.main {
		flex: 1;
		min-width: 0;
		display: flex;
		flex-direction: column;
	}

	.docbar {
		height: 39px;
		box-sizing: border-box;
		border-bottom: 1px solid #2b5597;
		padding: 2px 0 0 2px;
	}

	.doctab {
		width: 330px;
		height: 36px;
		background: #2b5597;
		color: #fff;
		font-family: var(--ui);
		font-size: 18.4px;
		display: flex;
		align-items: center;
		padding-left: 21px;
		box-sizing: border-box;
	}

	.docname {
		margin-left: 3px;
		white-space: nowrap;
	}

	.docx {
		margin-left: auto;
		margin-right: 3px;
		font: 700 19px 'DejaVu Sans', sans-serif;
	}

	.canvas {
		position: relative;
		flex: 1;
		background: #fafcfc;
		padding-top: 61px;
	}

	.part {
		position: absolute;
		left: 266px;
		top: 245px;
	}

	.splitter {
		position: relative;
		box-sizing: border-box;
		width: 375px;
		height: 13px;
		border: 2px solid #8a8a8a;
		background: linear-gradient(#d8d8d8, #b9b9b9);
		display: grid;
		place-items: center;
	}

	.grip {
		width: 38px;
		border-top: 2px dotted #5a6a80;
	}

	.tree {
		position: relative;
		margin-top: 5px;
		font-family: var(--ui);
		font-size: 18px;
		color: #111;
	}

	.rootrow {
		height: 23px;
		padding-left: 8px;
	}

	.rootlabel {
		box-sizing: border-box;
		width: 298px;
		height: 23px;
		display: flex;
		align-items: center;
		border: 1px solid #c5ced6;
		background: linear-gradient(#fbfcfd, #e8edf1);
		padding-left: 3px;
		white-space: nowrap;
	}

	.rootlabel span {
		margin: -2px 0 0 11px;
		letter-spacing: -0.2px;
	}

	.row {
		display: flex;
		align-items: flex-start;
		height: 24px;
	}

	.exp {
		box-sizing: border-box;
		width: 13px;
		height: 13px;
		margin-top: 4px;
		border: 1px solid #aab2ba;
		background: linear-gradient(#fff, #dde2e6);
		font: 700 13px/11px 'Liberation Sans', sans-serif;
		color: #222;
		text-align: center;
		flex: none;
	}

	.tchk {
		box-sizing: border-box;
		width: 20px;
		height: 18px;
		margin-top: 1px;
		border: 2px solid #4a5a70;
		background: #fff;
		display: grid;
		place-items: center;
		flex: none;
	}

	.lab {
		box-sizing: border-box;
		position: relative;
		height: 22px;
		display: flex;
		align-items: center;
		flex: none;
		border: 1px solid #c5ced6;
		background: linear-gradient(#f9fafb, #e2e8ec);
		white-space: nowrap;
	}

	.lab-ic {
		width: 30px;
		flex: none;
	}

	.lab-t {
		margin-top: -2px;
	}

	.lab.dim {
		color: #8a8a8a;
	}

	.lab.bold .lab-t {
		font-weight: 700;
	}

	.lab.sync {
		border-color: #efb75c;
		background: linear-gradient(#ffd06f, #f5ad2d 50%, #fbc154);
		font-weight: 700;
	}

	.sync-arrow {
		position: absolute;
		right: 16px;
		top: 3px;
	}

	/* 对话框 */
	.dialog {
		position: absolute;
		left: 772px;
		top: 273px;
		width: 800px;
		height: 705px;
		box-sizing: border-box;
		background: #f0f0f0;
		border: 1px solid #666;
		border-right: 0;
		box-shadow: 0 6px 20px rgba(0, 0, 0, 0.3);
		color: #555;
	}

	.dlg-title {
		height: 44px;
		background: #fff;
		padding-left: 11px;
		font-size: 17px;
		line-height: 42px;
		color: #222;
	}

	.dlg-body {
		display: flex;
	}

	.dlg-left {
		width: 229px;
		flex: none;
		font-family: var(--mono);
		font-size: 17px;
	}

	.dbox {
		box-sizing: border-box;
		width: 20px;
		height: 20px;
		border: 1px solid #333;
		background: #fff;
		display: grid;
		place-items: center;
		flex: none;
	}

	.gray {
		color: #666;
		white-space: nowrap;
	}

	.l-check {
		display: flex;
		align-items: center;
		gap: 4px;
		height: 20px;
	}

	.l-check.first {
		margin: 17px 0 0 9px;
	}

	.l-check.first .gray {
		margin-bottom: 3px;
	}

	.l-check.upd {
		margin: 18px 0 0 16px;
		gap: 6px;
	}

	.l-lab {
		line-height: 20px;
		white-space: nowrap;
	}

	.coord {
		margin: 18px 0 -1px 15px;
	}

	.select {
		box-sizing: border-box;
		display: flex;
		align-items: center;
		justify-content: space-between;
		width: 198px;
		height: 26px;
		margin: 0 0 0 14px;
		padding: 0 14px 5px 4px;
		background: #fff;
		border: 1px solid #777;
	}

	.select svg {
		margin-top: 5px;
	}

	fieldset {
		box-sizing: border-box;
		width: 198px;
		margin: 9px 0 0 14px;
		padding: 0 12px 10px;
		border: 1px solid #dcdcdc;
		min-inline-size: 0;
	}

	legend {
		margin-left: -5px;
		padding: 6px 2px 0;
		line-height: 20px;
	}

	.name { margin: 5px 0 -2px; }
	.dens { margin: 11px 0 -3px; }

	.finput {
		box-sizing: border-box;
		width: 171px;
		height: 27px;
		margin-top: 2px;
		border: 1px solid #888;
		padding-left: 4px;
		line-height: 25px;
		font-size: 16px;
		letter-spacing: -0.6px;
		color: #444;
	}

	.change {
		box-sizing: border-box;
		width: 111px;
		height: 30px;
		margin: 8px 0 0 62px;
		background: #e1e1e1;
		border: 1px solid #adadad;
		text-align: center;
		line-height: 29px;
		color: #555;
	}

	.prec {
		margin: 16px 0 0 15px;
		word-spacing: -4px;
	}

	.spin {
		box-sizing: border-box;
		display: flex;
		align-items: center;
		justify-content: space-between;
		width: 90px;
		height: 27px;
		margin: 3px 0 0 14px;
		padding-left: 3px;
		background: #fff;
		border: 1px solid #aaa;
		font-size: 16px;
		color: #444;
	}

	.spin-btns {
		display: grid;
		grid-template-rows: 12px 12px;
		gap: 1px;
		margin-right: 1px;
	}

	.spin-btns b {
		width: 22px;
		background: #f0f0f0;
		border: 1px solid #bbb;
		box-sizing: border-box;
		display: grid;
		place-items: center;
	}

	.hr {
		width: 192px;
		margin: 16px 0 0 11px;
		border-top: 1px solid #bbb;
	}

	.prop {
		margin: 37px 0 0 15px;
		font-size: 17.5px;
	}

	.dlg-right {
		flex: 1;
		min-width: 0;
		padding-top: 14px;
		font-family: var(--ui);
		font-size: 18px;
		color: #333;
	}

	.dtabs {
		display: flex;
		align-items: flex-end;
		height: 28px;
	}

	.dtab {
		box-sizing: border-box;
		width: 63px;
		height: 26px;
		line-height: 26px;
		padding-right: 18px;
		text-align: center;
		border: 1px solid #dcdcdc;
		border-bottom: 0;
		font-size: 17.5px;
		color: #222;
	}

	.dtab.on {
		width: 69px;
		height: 28px;
		background: #fff;
		line-height: 28px;
		padding-right: 18px;
		border: 0;
	}

	.panel {
		box-sizing: border-box;
		height: 530px;
		padding-top: 17px;
		background: #fff;
		border-left: 1px solid #d4d4d4;
		border-bottom: 1px solid #d4d4d4;
		position: relative;
	}

	.two {
		display: flex;
		gap: 10px;
		padding-left: 20px;
	}

	.field {
		width: 204px;
	}

	.f-lab {
		height: 27px;
		line-height: 24px;
		white-space: nowrap;
	}

	.val {
		box-sizing: border-box;
		height: 36px;
		border: 1px solid #888;
		background: #fff;
		padding-left: 3px;
		font-size: 18.8px;
		line-height: 29px;
		white-space: nowrap;
		color: #333;
	}

	.val.tall {
		height: 35px;
	}

	.sec-head {
		display: flex;
		align-items: center;
		height: 24px;
		margin-top: 20px;
		padding-left: 14px;
	}

	.s-t1 { width: 91px; color: #333; margin-top: -2px; }

	.s-line {
		height: 2px;
		background: #8a8a8a;
	}

	.sec-head > .s-line:nth-child(2) { width: 225px; }

	.s-t2 {
		margin: 4px 0 0 14px;
	}

	.centers {
		display: flex;
		height: 199px;
	}

	.center-l {
		width: 318px;
		flex: none;
		box-sizing: border-box;
		padding-left: 61px;
	}

	.vline {
		width: 2px;
		height: 199px;
		background: #8a8a8a;
		flex: none;
	}

	.center-r {
		box-sizing: border-box;
		padding-left: 50px;
		flex: none;
		width: 300px;
	}

	.center-r .ck-row {
		margin-left: 4px;
	}

	.ck-row {
		position: relative;
		display: flex;
		align-items: center;
		gap: 5px;
		height: 20px;
		margin: 16px 0 26px;
		white-space: nowrap;
	}

	.ck-row .dbox {
		border-color: #444;
	}

	.symbol {
		position: absolute;
		left: 171px;
		top: -16px;
		width: 40px;
		height: 34px;
	}

	.symbol b {
		display: block;
		font: 700 14px/14px 'DejaVu Sans', sans-serif;
		color: #111;
	}

	.symbol i {
		position: absolute;
		left: 19px;
		top: 14px;
		width: 14px;
		height: 14px;
		border-radius: 50%;
		background: #1fc31f;
		border: 1px solid #1a5a1a;
		box-sizing: border-box;
	}

	.xyz {
		display: flex;
		align-items: center;
		height: 36px;
		margin-bottom: 9px;
		width: 220px;
	}

	.xyz > span {
		width: 27px;
		flex: none;
	}

	.xyz .val {
		width: 193px;
		flex: none;
	}

	.sec-head.second {
		height: 24px;
		margin-top: 15px;
		padding-left: 11px;
	}

	.sec-head.second .s-line {
		flex: 1;
	}

	.s-t3 {
		width: 164px;
		flex: none;
	}

	.inertia {
		display: grid;
		grid-template-columns: 193px 193px;
		column-gap: 21px;
		row-gap: 7px;
		padding: 8px 0 0 20px;
	}

	.in-lab {
		height: 26px;
		line-height: 23px;
		font-family: 'Open Sans', sans-serif;
	}

	.btns {
		display: flex;
		align-items: flex-start;
		gap: 8px;
		padding: 1px 0 0 114px;
		font-family: var(--mono);
		font-size: 17px;
		color: #555;
	}

	.btn {
		box-sizing: border-box;
		width: 111px;
		height: 30px;
		background: #e1e1e1;
		border: 1px solid #adadad;
		text-align: center;
		line-height: 30px;
		white-space: nowrap;
	}

	.main-btn {
		border: 2px solid #2a77ad;
		line-height: 29px;
	}

	.cut-btn {
		height: 19px;
		margin: 11px 0 0 1px;
		border-top: 0;
		overflow: hidden;
		display: flex;
		flex-direction: column;
		justify-content: flex-end;
		padding-left: 4px;
		text-align: left;
	}

	/* 水印 */
	.mark {
		position: absolute;
		left: 1164px;
		top: 918px;
		display: flex;
		gap: 7px;
		pointer-events: none;
	}

	.mark-t {
		margin-top: 5px;
		white-space: nowrap;
	}

	.mark-a {
		font: 700 42px/42px 'Liberation Sans', 'Noto Sans CJK SC', sans-serif;
		color: rgba(255, 255, 255, 0.62);
	}

	.mark-b {
		margin-top: 4px;
		font: 700 14px/16px 'Liberation Sans', sans-serif;
		letter-spacing: 3.8px;
		color: rgba(255, 255, 255, 0.55);
	}
</style>
